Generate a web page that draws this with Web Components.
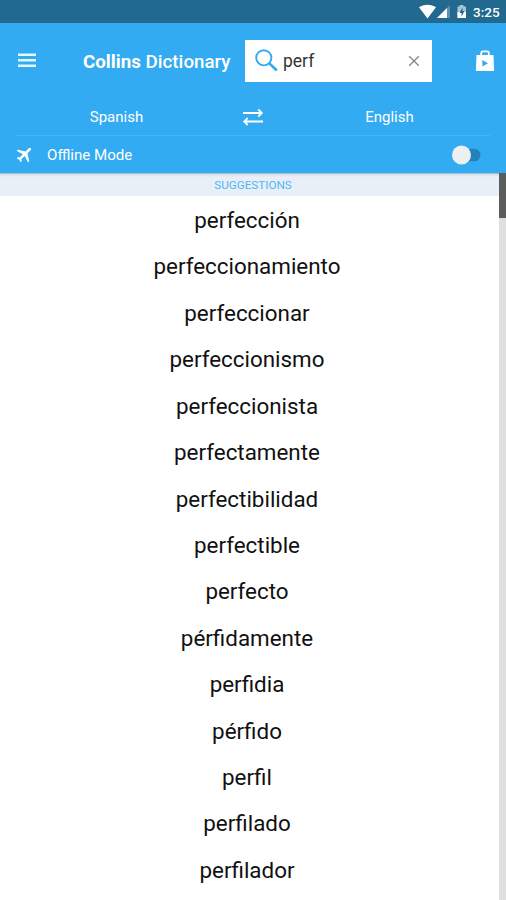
<!DOCTYPE html>
<html lang="en">
<head>
<meta charset="utf-8">
<title>Collins Dictionary</title>
<style>
html, body {
  margin: 0;
  height: 100%;
  overflow: hidden;
}
</style>
</head>
<body>
<cd-app></cd-app>

<script>
'use strict';

const statusBarTemplate = document.createElement('template');
statusBarTemplate.innerHTML = `
<style>
:host {
  display: flex;
  justify-content: flex-end;
  align-items: center;
  box-sizing: border-box;
  height: 23px;
  padding-right: 6px;
  background: #21698f;
  color: #fff;
  font-size: 13.500px;
  font-weight: 500;
}
svg {
  display: block;
  flex: none;
}
time {
  line-height: 23px;
  padding-top: 1px;
  width: 27px;
  white-space: nowrap;
}
</style>
<svg width="54" height="23" viewBox="0 0 54 23">
  <path fill="#fff" d="M0 7.300C4.600 3.800 12.400 3.800 17 7.300L8.500 18.500z"/>
  <path fill="#5c91ae" d="M31 5v13H18z"/>
  <path fill="#fff" d="M28 8v10H18z"/>
  <path fill="#a9c5d4" d="M38.500 6.500h2V5h4v1.500h2.500V18h-8.500z"/>
  <path fill="#fff" d="M38.500 12h8.500v6h-8.500z"/>
  <path fill="#21698f" d="M43.500 7.500l-3 5.500h2v3.500l3-5.500h-2z"/>
</svg>
<time></time>
`;

class StatusBar extends HTMLElement {
	constructor() {
		super();
		const shadow = this.attachShadow({mode: 'open'});
		shadow.appendChild(statusBarTemplate.content.cloneNode(true));
	}

	connectedCallback() {
		this.shadowRoot.querySelector('time').textContent = this.getAttribute('time');
	}
}

customElements.define('cd-status-bar', StatusBar);

const searchBoxTemplate = document.createElement('template');
searchBoxTemplate.innerHTML = `
<style>
:host {
  display: flex;
  align-items: center;
  box-sizing: border-box;
  width: 187px;
  height: 42px;
  padding: 0 12px 0 10px;
  background: #fff;
  color: #333;
  font-size: 17.500px;
}
svg {
  display: block;
  flex: none;
}
.query {
  flex: 1;
  padding: 1px 0 0 5px;
}
</style>
<svg width="23" height="23" viewBox="0 0 23 23" fill="none" stroke="#32abf3">
  <circle cx="8.800" cy="8.800" r="7.600" stroke-width="1.900"/>
  <path d="M14 14l7.800 7.500" stroke-width="2.600"/>
</svg>
<span class="query"><slot></slot></span>
<svg width="12" height="12" viewBox="0 0 12 12" fill="none" stroke="#858585" stroke-width="1.300">
  <path d="M1.200 1.200l9.600 9.600M10.800 1.200L1.200 10.800"/>
</svg>
`;

class SearchBox extends HTMLElement {
	constructor() {
		super();
		const shadow = this.attachShadow({mode: 'open'});
		shadow.appendChild(searchBoxTemplate.content.cloneNode(true));
	}
}

customElements.define('cd-search-box', SearchBox);

const toolbarTemplate = document.createElement('template');
toolbarTemplate.innerHTML = `
<style>
:host {
  display: flex;
  align-items: center;
  box-sizing: border-box;
  height: 75px;
  padding: 0 11px 0 18px;
}
svg {
  display: block;
  flex: none;
}
h1 {
  flex: none;
  width: 162px;
  margin: 0 0 0 47px;
  padding-top: 2px;
  font-size: 18.750px;
  font-weight: 500;
  white-space: nowrap;
}
b {
  font-weight: 700;
}
.bag {
  margin-left: auto;
}
</style>
<svg width="18" height="16" viewBox="0 0 18 16" fill="#e6f6ff">
  <path d="M0 .5h18V3H0zM0 6h18v2.500H0zM0 11.500h18V14H0z"/>
</svg>
<h1><b>Collins</b> Dictionary</h1>
<slot></slot>
<svg class="bag" width="20" height="24" viewBox="0 0 20 24">
  <path fill="none" stroke="#fff" stroke-width="1.800" d="M6.200 7V4Q6.200 2.400 7.800 2.400h4.400Q13.800 2.400 13.800 4V7"/>
  <path fill="#fff" d="M1.500 6h17l.6 16H.9z"/>
  <path fill="#32abf3" d="M7.300 11l5.700 3.200-5.700 3.300z"/>
</svg>
`;

class Toolbar extends HTMLElement {
	constructor() {
		super();
		const shadow = this.attachShadow({mode: 'open'});
		shadow.appendChild(toolbarTemplate.content.cloneNode(true));
	}
}

customElements.define('cd-toolbar', Toolbar);

const languagePairTemplate = document.createElement('template');
languagePairTemplate.innerHTML = `
<style>
:host {
  display: grid;
  grid-template-columns: 1fr 72px 1fr;
  align-items: center;
  justify-items: center;
  box-sizing: border-box;
  height: 38px;
  margin: 0 16px;
  border-bottom: 1px solid #48b4f5;
  font-size: 15px;
}
span {
  padding-top: 1px;
}
svg {
  display: block;
}
</style>
<span class="from"></span>
<svg width="22" height="20" viewBox="0 0 22 20" fill="none" stroke="#fff" stroke-width="1.800">
  <path d="M1 6h18M16.300 2.500l3.500 3.500-3.500 3.500M21 14.500H3M5.700 11l-3.500 3.500 3.500 3.500"/>
</svg>
<span class="to"></span>
`;

class LanguagePair extends HTMLElement {
	constructor() {
		super();
		const shadow = this.attachShadow({mode: 'open'});
		shadow.appendChild(languagePairTemplate.content.cloneNode(true));
	}

	connectedCallback() {
		const shadow = this.shadowRoot;
		shadow.querySelector('.from').textContent = this.getAttribute('from');
		shadow.querySelector('.to').textContent = this.getAttribute('to');
	}
}

customElements.define('cd-language-pair', LanguagePair);

const offlineToggleTemplate = document.createElement('template');
offlineToggleTemplate.innerHTML = `
<style>
:host {
  display: flex;
  align-items: center;
  height: 37px;
  padding: 0 24px 0 17px;
  font-size: 15.100px;
}
svg {
  display: block;
}
.label {
  flex: 1;
  padding-left: 16px;
}
</style>
<svg width="14" height="14" viewBox="0 0 14 14" fill="#fff">
  <path transform="translate(7.700 6.200) scale(.86) rotate(45) translate(-11.500 -12)" d="M21 16v-2l-8-5V3.500c0-.83-.67-1.500-1.500-1.500S10 2.670 10 3.500V9l-8 5v2l8-2.500V19l-2 1.500V22l3.500-1 3.500 1v-1.500L13 19v-5.500l8 2.500z"/>
</svg>
<span class="label"><slot></slot></span>
<svg width="31" height="20" viewBox="0 0 31 20">
  <rect x="7" y="3.700" width="22.500" height="12.600" rx="6.300" fill="#2480b9"/>
  <circle cx="10.500" cy="10" r="9.500" fill="#eeefef"/>
</svg>
`;

class OfflineToggle extends HTMLElement {
	constructor() {
		super();
		const shadow = this.attachShadow({mode: 'open'});
		shadow.appendChild(offlineToggleTemplate.content.cloneNode(true));
	}
}

customElements.define('cd-offline-toggle', OfflineToggle);

const suggestionListTemplate = document.createElement('template');
suggestionListTemplate.innerHTML = `
<style>
:host {
  display: grid;
  grid-template-columns: 1fr 7px;
  grid-template-rows: 727px;
  background: #fff;
}
h2 {
  box-sizing: border-box;
  height: 23px;
  margin: 0;
  padding-left: 7px;
  border-top: 1px solid #a4bdca;
  background: linear-gradient(#d5dde4, #e9eff6 3px);
  color: #4db7f5;
  font-size: 11.700px;
  font-weight: 400;
  line-height: 23px;
  text-align: center;
}
ul {
  margin: 0;
  padding: 0 5px 0 0;
  list-style: none;
}
li {
  height: 46.430px;
  color: #111;
  font-size: 22.400px;
  line-height: 49px;
  text-align: center;
}
.track {
  background: #dfdfdf;
}
.thumb {
  height: 45px;
  background: #5c5c5c;
}
</style>
<div>
  <h2></h2>
  <ul></ul>
</div>
<div class="track"><div class="thumb"></div></div>
`;

class SuggestionList extends HTMLElement {
	constructor() {
		super();
		const shadow = this.attachShadow({mode: 'open'});
		shadow.appendChild(suggestionListTemplate.content.cloneNode(true));
	}

	connectedCallback() {
		this.shadowRoot.querySelector('h2').textContent = this.getAttribute('heading');
	}

	set words(words) {
		const list = this.shadowRoot.querySelector('ul');
		list.textContent = '';
		for (const word of words) {
			const item = document.createElement('li');
			item.textContent = word;
			list.appendChild(item);
		}
	}
}

customElements.define('cd-suggestion-list', SuggestionList);

const appTemplate = document.createElement('template');
appTemplate.innerHTML = `
<style>
:host {
  display: block;
  height: 900px;
  overflow: hidden;
  font-family: Roboto, sans-serif;
}
header {
  background: #32abf3;
  color: #fff;
}
</style>
<cd-status-bar time="3:25"></cd-status-bar>
<header>
  <cd-toolbar><cd-search-box>perf</cd-search-box></cd-toolbar>
  <cd-language-pair from="Spanish" to="English"></cd-language-pair>
  <cd-offline-toggle>Offline Mode</cd-offline-toggle>
</header>
<cd-suggestion-list heading="SUGGESTIONS"></cd-suggestion-list>
`;

class App extends HTMLElement {
	constructor() {
		super();
		const shadow = this.attachShadow({mode: 'open'});
		shadow.appendChild(appTemplate.content.cloneNode(true));
	}

	connectedCallback() {
		this.shadowRoot.querySelector('cd-suggestion-list').words = [
			'perfección',
			'perfeccionamiento',
			'perfeccionar',
			'perfeccionismo',
			'perfeccionista',
			'perfectamente',
			'perfectibilidad',
			'perfectible',
			'perfecto',
			'pérfidamente',
			'perfidia',
			'pérfido',
			'perfil',
			'perfilado',
			'perfilador',
		];
	}
}

customElements.define('cd-app', App);
</script>
</body>
</html>
